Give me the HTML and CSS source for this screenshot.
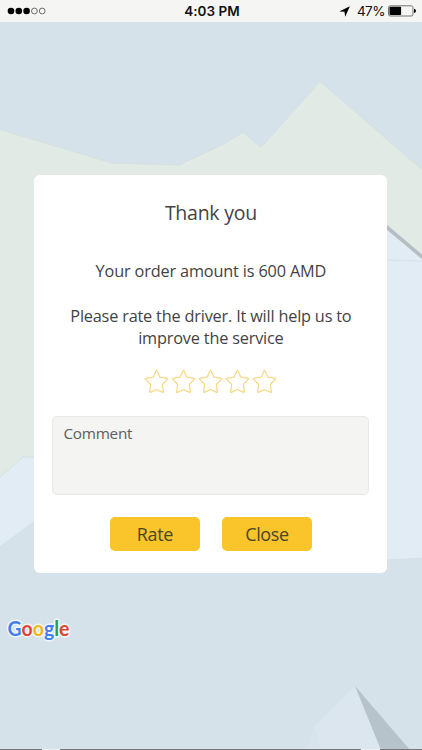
FILE: index.html
```
<!DOCTYPE html>
<html lang="en">
<head>
<meta charset="utf-8">
<title>Rate the driver</title>
<link rel="stylesheet" href="styles.css">
</head>
<body>
<svg class="map" viewBox="0 0 422 750" aria-hidden="true">
  <rect width="422" height="750" fill="#d6e2ea"/>
  <path d="M-2 129L112 163L179 165L224 144L243 132L261 147.500L320 81.500L424 171.500V560H-2Z" fill="#e1eae4" stroke="#d2dddd" stroke-width=".7"/>
  <path d="M386 225L424 257V558L387 560H34V522L-2 548V479L23 457H200Z" fill="#e1ecf5" stroke="#d0dde4" stroke-width=".7"/>
  <path d="M35 521L-2 548V600H424V558L387 560H34Z" fill="#d6e2ea"/>
  <path d="M387 260L422 261" stroke="#d2dfe9" stroke-width=".8"/>
  <path d="M386 226.500L424 258.500" stroke="#b5bfc3" stroke-width="3.600"/>
  <path d="M355 686L315 726L320 750H381Z" fill="#dbe6ef"/>
  <path d="M315 726L306 750H320Z" fill="#d8e4ec"/>
  <path d="M355 686L381 750H410Z" fill="#b7c3cb"/>
  <path d="M0 749.500H422" stroke="#77797e"/>
  <path d="M42 749.500H60M361 749.500H380" stroke="#eef1f3"/>
</svg>
<div class="screen">
  <header class="status">
    <svg class="signal" viewBox="0 0 40 8">
      <circle cx="4" cy="4" r="3.300"/><circle cx="11.800" cy="4" r="3.300"/><circle cx="19.600" cy="4" r="3.300"/>
      <circle class="empty" cx="27.400" cy="4" r="2.900"/><circle class="empty" cx="35.200" cy="4" r="2.900"/>
    </svg>
    <span class="time">4:03 PM</span>
    <div class="power">
      <svg class="location" viewBox="0 0 10 10"><path d="M9.900 .3L5.600 9.800L5 5.200L.2 5Z"/></svg>
      <span class="percent">47%</span>
      <svg class="battery" viewBox="0 0 28 12"><rect x=".5" y=".8" width="24.500" height="10.200" rx="1.800" fill="none" stroke="#666" stroke-width=".9"/><rect x="1.500" y="1.700" width="11.600" height="8.400" rx=".8"/><path d="M26 3.700Q28 4.300 28 5.900T26 8.100Z"/></svg>
    </div>
  </header>
  <main class="card">
    <h1>Thank you</h1>
    <p class="amount">Your order amount is 600 AMD</p>
    <p class="prompt">Please rate the driver. It will help us to<br>improve the service</p>
    <svg class="stars" viewBox="0 0 135 26">
      <defs><path id="star" d="M13.100 1.700Q13.500 1.200 13.900 1.700L16.900 8.200L24.300 9.300Q25 9.600 24.500 10.100L19.300 15.500L20.400 22.900Q20.300 23.600 19.700 23.400L13.500 20.500L7.300 23.400Q6.700 23.600 6.600 22.900L7.700 15.500L2.500 10.100Q2 9.600 2.700 9.300L10.100 8.200Z"/></defs>
      <use href="#star"/><use href="#star" x="27"/><use href="#star" x="54"/><use href="#star" x="81"/><use href="#star" x="108"/>
    </svg>
    <div class="comment">Comment</div>
    <div class="actions"><button class="rate">Rate</button><button class="close">Close</button></div>
  </main>
  <svg class="google" viewBox="0 0 72 30">
    <text x="3.500" y="20.500" textLength="62" lengthAdjust="spacingAndGlyphs"><tspan fill="#4380ee">G</tspan><tspan fill="#dc4437">o</tspan><tspan fill="#f2b616">o</tspan><tspan fill="#4380ee">g</tspan><tspan fill="#249c58">l</tspan><tspan fill="#dc4437">e</tspan></text>
  </svg>
</div>
</body>
</html>
```
FILE: styles.css
```
* { box-sizing: border-box; }
body { margin: 0; overflow: hidden; background: #d6e2ea; }
.map { position: absolute; inset: 0; width: 422px; height: 750px; }
.screen { position: relative; width: 422px; height: 750px; font-family: "Open Sans", sans-serif; color: #434343; }
.status { height: 22px; background: #f5f5f3; display: grid; grid-template-columns: 1fr auto 1fr; align-items: center; padding: 0 6px 0 7px; font-family: Inter, sans-serif; color: #111; }
.signal { width: 40px; height: 8px; }
.empty { fill: none; stroke: #333; stroke-width: .7; }
.time { font-size: 13.500px; font-weight: 600; letter-spacing: .05px; padding-left: 1px; }
.power { display: flex; align-items: center; justify-content: flex-end; }
.location { width: 11px; height: 11px; margin-right: 7px; }
.percent { font-size: 13.500px; letter-spacing: -.5px; margin-right: 3px; }
.battery { width: 28px; height: 12px; }
.card { width: 353px; height: 398px; margin: 153px 0 0 34.400px; padding: 24px 18px 0; background: #fff; border-radius: 6px; text-align: center; }
h1 { margin: 0; font-size: 19.500px; line-height: 27px; font-weight: 400; letter-spacing: -.25px; }
.amount { margin: 34px 0 0; font-size: 16.300px; line-height: 23px; letter-spacing: -.16px; }
.prompt { margin: 22px 0 0; font-size: 16.300px; line-height: 22px; letter-spacing: -.19px; white-space: nowrap; }
.stars { display: block; width: 135px; height: 26px; margin: 20px auto 0; fill: #fff; stroke: #f8d785; stroke-width: 1.200; stroke-linejoin: round; }
.comment { height: 79px; margin-top: 20.500px; padding: 5px 10px; border: 1px solid #e9e9e9; border-radius: 5px; background: #f4f4f2; text-align: left; font-size: 15.300px; line-height: 22px; letter-spacing: -.25px; color: #5d5d5d; }
.actions { display: flex; justify-content: center; gap: 22px; margin-top: 22.500px; }
button { width: 90px; height: 34px; padding: 0; border: 0; border-radius: 5px; background: #fac42b; color: #4b4528; font: 18px/34px "Open Sans", sans-serif; letter-spacing: -.4px; }
.google { display: block; width: 72px; height: 30px; margin: 42px 0 0 4px; }
.google text { font: 700 20px Lato, sans-serif; paint-order: stroke; stroke: #f2f5f7; stroke-width: 3px; stroke-linejoin: round; }
```
